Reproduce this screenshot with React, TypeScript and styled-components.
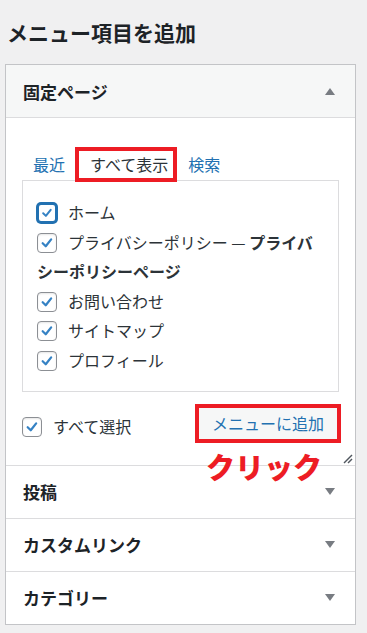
import React from "react";
import styled, { createGlobalStyle } from "styled-components";

const Global = createGlobalStyle`
  html, body { margin: 0; padding: 0; background: #f0f0f1; }
  body { font-family: "Noto Sans CJK JP", "Noto Sans", sans-serif; color: #2c3338; }
  * { box-sizing: border-box; }
`;

const RED = "#ed1c24";

const Page = styled.div`
  padding: 18px 0 0 5px;
  width: 356px;
`;

const Heading = styled.h2`
  margin: 0 0 18px 2px;
  font-size: 21px;
  line-height: 28px;
  font-weight: 700;
  color: #1d2327;
`;

const Panel = styled.div`
  width: 351px;
  border: 1px solid #c3c4c7;
  background: #fff;
`;

const Section = styled.div<{ $first?: boolean }>`
  border-top: ${(p) => (p.$first ? "none" : "1px solid #dcdcde")};
`;

const SectionHeader = styled.div<{ $open?: boolean }>`
  height: 52px;
  display: flex;
  align-items: center;
  justify-content: space-between;
  padding: 0 20px 0 17px;
  background: ${(p) => (p.$open ? "#f6f7f7" : "#fff")};
`;

const SectionTitle = styled.span`
  font-size: 17px;
  font-weight: 700;
  color: #1d2327;
  line-height: 1;
`;

const Body = styled.div`
  position: relative;
  border-top: 1px solid #dcdcde;
  padding: 29px 16px 22px;
`;

const Tabs = styled.div`
  display: flex;
  align-items: stretch;
  padding-left: 11px;
  margin-bottom: -2px;
  position: relative;
  z-index: 1;
`;

const Tab = styled.span<{ $active?: boolean }>`
  display: flex;
  align-items: center;
  height: 35px;
  font-size: 16px;
  line-height: 27px;
  color: ${(p) => (p.$active ? "#2c3338" : "#2271b1")};
  background: ${(p) => (p.$active ? "#fff" : "transparent")};
  border: ${(p) => (p.$active ? `4px solid ${RED}` : "none")};
  padding: ${(p) => (p.$active ? "0 5px 0 11px" : "0")};
  margin-right: ${(p) => (p.$active ? "11px" : "10px")};
`;

const ListBox = styled.div`
  border: 1px solid #dcdcde;
  padding: 17px 14px 15px;
`;

const Item = styled.div`
  font-size: 16px;
  line-height: 29.6px;
  color: #2c3338;
  word-break: break-all;
`;

const Strong = styled.b`
  font-weight: 700;
`;

const Box = styled.span<{ $focus?: boolean }>`
  display: inline-flex;
  align-items: center;
  justify-content: center;
  width: 20px;
  height: 20px;
  vertical-align: -4px;
  margin-right: 11px;
  border-radius: 4px;
  background: #fff;
  border: ${(p) => (p.$focus ? "2px solid #2271b1" : "1px solid #8c8f94")};
  box-shadow: ${(p) =>
    p.$focus ? "0 0 0 1px #2271b1" : "inset 0 1px 2px rgba(0,0,0,0.1)"};
`;

const Footer = styled.div`
  display: flex;
  justify-content: space-between;
  align-items: center;
  margin-top: 12px;
  margin-right: -2px;
`;

const SelectAll = styled.label`
  font-size: 16px;
  line-height: 24px;
  padding-top: 5px;
  color: #2c3338;
`;

const ButtonWrap = styled.div`
  position: relative;
`;

const AddButton = styled.button`
  width: 146px;
  height: 39px;
  border: 4px solid ${RED};
  background: #f6f7f7;
  color: #2271b1;
  font-family: inherit;
  font-size: 16px;
  padding: 0;
  display: flex;
  align-items: center;
  justify-content: center;
  cursor: pointer;
`;

const Annotation = styled.span`
  position: absolute;
  left: 11px;
  top: 100%;
  margin-top: 6px;
  font-size: 29px;
  font-weight: 900;
  line-height: 34px;
  color: ${RED};
  white-space: nowrap;
`;

const Grip = styled.svg`
  position: absolute;
  right: 2px;
  bottom: 1px;
`;

const Check = () => (
  <svg width="20" height="20" viewBox="0 0 20 20">
    <polyline
      points="5.2,10.3 8.6,13.6 14.6,6"
      fill="none"
      stroke="#3582c4"
      strokeWidth="2.5"
      strokeLinecap="round"
      strokeLinejoin="round"
    />
  </svg>
);

const Arrow = ({ up }: { up?: boolean }) => (
  <svg width="10" height="7" viewBox="0 0 10 7">
    <polygon
      fill="#787c82"
      points={up ? "5,0 10,7 0,7" : "0,0 10,0 5,7"}
    />
  </svg>
);

const CheckBox = ({ focus }: { focus?: boolean }) => (
  <Box $focus={focus}>
    <Check />
  </Box>
);

const closed = ["投稿", "カスタムリンク", "カテゴリー"];

export default function App() {
  return (
    <>
      <Global />
      <Page>
        <Heading>メニュー項目を追加</Heading>
        <Panel>
          <Section $first>
            <SectionHeader $open>
              <SectionTitle>固定ページ</SectionTitle>
              <Arrow up />
            </SectionHeader>
            <Body>
              <Tabs>
                <Tab>最近</Tab>
                <Tab $active>すべて表示</Tab>
                <Tab>検索</Tab>
              </Tabs>
              <ListBox>
                <Item>
                  <CheckBox focus />ホーム
                </Item>
                <Item>
                  <CheckBox />プライバシーポリシー —{" "}
                  <Strong>プライバシーポリシーページ</Strong>
                </Item>
                <Item>
                  <CheckBox />お問い合わせ
                </Item>
                <Item>
                  <CheckBox />サイトマップ
                </Item>
                <Item>
                  <CheckBox />プロフィール
                </Item>
              </ListBox>
              <Footer>
                <SelectAll>
                  <CheckBox />すべて選択
                </SelectAll>
                <ButtonWrap>
                  <AddButton>メニューに追加</AddButton>
                  <Annotation>クリック</Annotation>
                </ButtonWrap>
              </Footer>
              <Grip width="10" height="10" viewBox="0 0 10 10">
                <line x1="1" y1="9" x2="9" y2="1" stroke="#50575e" strokeWidth="1.4" />
                <line x1="5" y1="9" x2="9" y2="5" stroke="#50575e" strokeWidth="1.4" />
              </Grip>
            </Body>
          </Section>
          {closed.map((t) => (
            <Section key={t}>
              <SectionHeader>
                <SectionTitle>{t}</SectionTitle>
                <Arrow />
              </SectionHeader>
            </Section>
          ))}
        </Panel>
      </Page>
    </>
  );
}
